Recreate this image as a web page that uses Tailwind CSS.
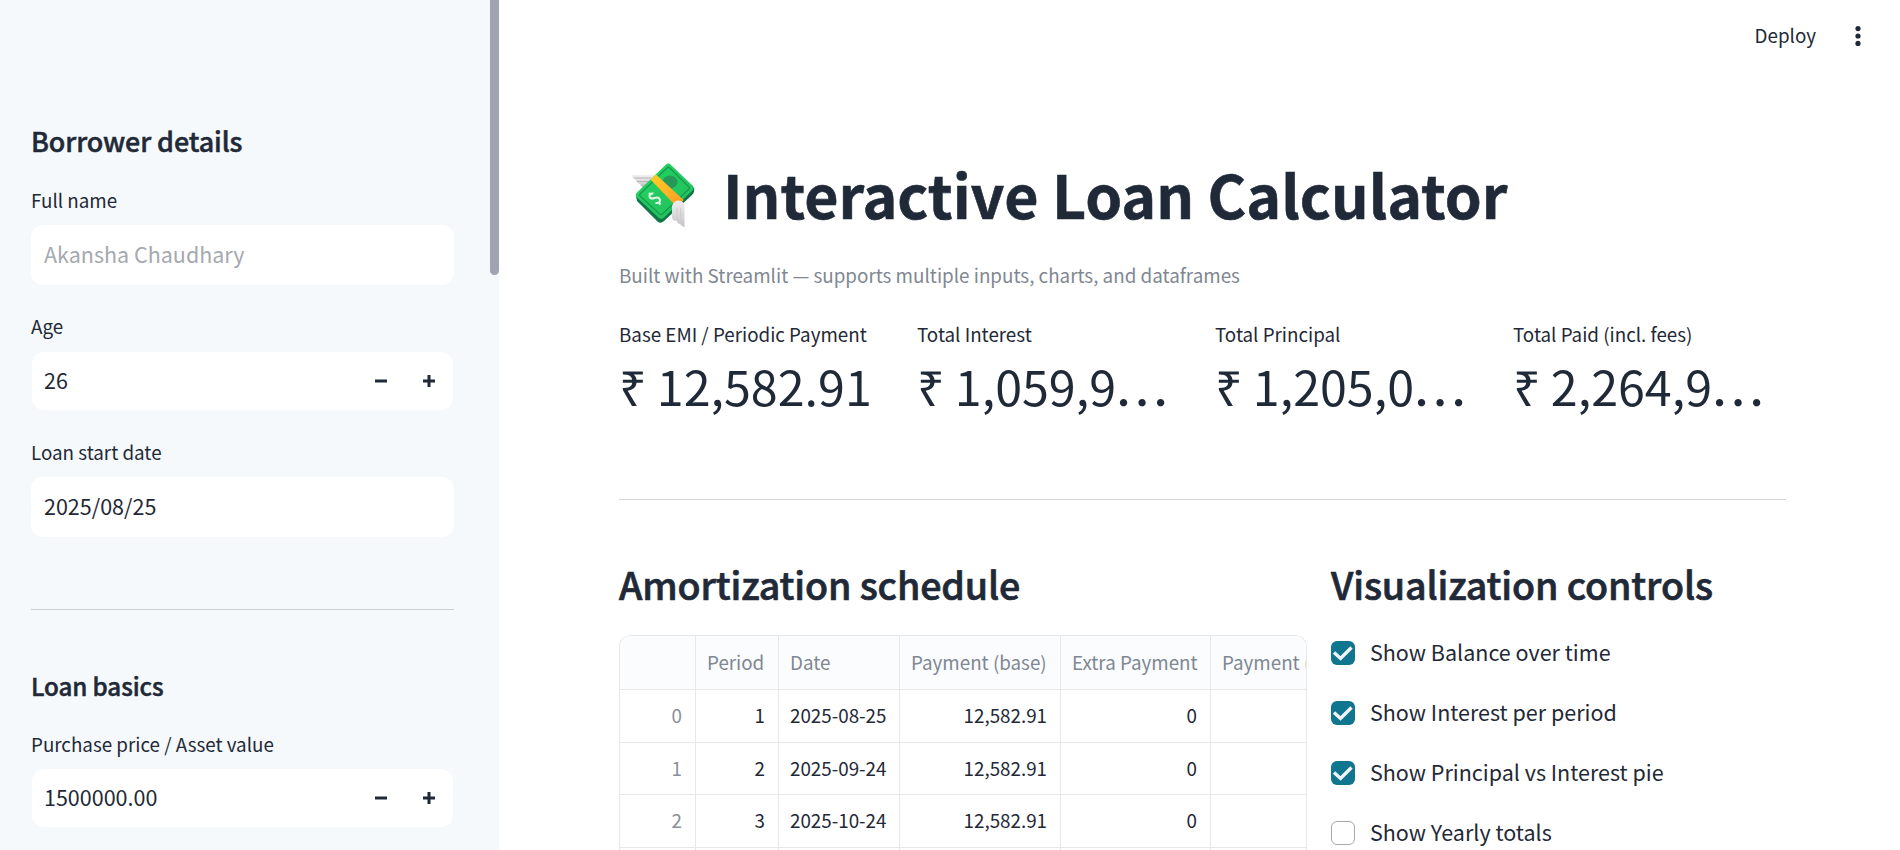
<!DOCTYPE html>
<html lang="en">
<head>
<meta charset="utf-8">
<title>Interactive Loan Calculator</title>
<script src="https://cdn.jsdelivr.net/npm/@tailwindcss/browser@4"></script>
</head>
<body class="h-[850px] w-[1900px] overflow-hidden bg-white font-['Noto_Sans_CJK_KR','Noto_Sans_CJK_SC',sans-serif] text-[#1f2937]">
<div class="flex h-[850px]">
  <aside class="relative flex w-[499px] shrink-0 flex-col overflow-hidden bg-[#f5f9fc] pr-[45px] pl-[31px] pt-[123px]">
    <div class="absolute top-0 right-0 h-[275px] w-[9px] rounded-b-full bg-[#9fa4ae]"></div>
    <h2 class="h-9 shrink-0 whitespace-nowrap text-[26.86px] leading-9 font-medium tracking-[-0.08px] [-webkit-text-stroke:0.5px_#1f2937]"><span>Borrower details</span></h2>
    <label class="mt-[26px] h-[30px] shrink-0 text-[18.8px] leading-[30px]"><span>Full name</span></label>
    <div class="mt-[10px] flex h-[60px] shrink-0 items-center rounded-xl bg-white px-[13px] pb-[3px] text-[21.5px] leading-8 text-[#a5a9b0]"><span>Akansha Chaudhary</span></div>
    <label class="mt-[26px] h-[30px] shrink-0 text-[18.8px] leading-[30px]"><span>Age</span></label>
    <div class="mx-px mt-[11px] flex h-[58px] shrink-0 items-center rounded-xl bg-white pr-[18px] pl-[12px] text-[21.5px] leading-8">
      <span class="grow pb-[3px]">26</span>
      <svg class="mr-9 size-3" viewBox="0 0 12 12"><path d="M0 6H12" stroke="#1f2937" stroke-width="3"/></svg>
      <svg class="size-3" viewBox="0 0 12 12"><path d="M0 6H12M6 0V12" stroke="#1f2937" stroke-width="3"/></svg>
    </div>
    <label class="mt-[27px] h-[30px] shrink-0 text-[18.8px] leading-[30px]"><span>Loan start date</span></label>
    <div class="mt-[10px] flex h-[60px] shrink-0 items-center rounded-xl bg-white px-[13px] pb-[3px] text-[21.5px] leading-8"><span>2025/08/25</span></div>
    <div class="mt-[72px] h-px shrink-0 bg-[#cbcfd3]"></div>
    <h3 class="mt-[58px] h-9 shrink-0 whitespace-nowrap text-[24.2px] leading-9 font-medium tracking-[-0.1px] [-webkit-text-stroke:0.5px_#1f2937]"><span>Loan basics</span></h3>
    <label class="mt-[25px] h-[30px] shrink-0 text-[18.8px] leading-[30px]"><span>Purchase price / Asset value</span></label>
    <div class="mx-px mt-[10px] flex h-[58px] shrink-0 items-center rounded-xl bg-white pr-[18px] pl-[12px] text-[21.5px] leading-8">
      <span class="grow pb-[2px]">1500000.00</span>
      <svg class="mr-9 size-3" viewBox="0 0 12 12"><path d="M0 6H12" stroke="#1f2937" stroke-width="3"/></svg>
      <svg class="size-3" viewBox="0 0 12 12"><path d="M0 6H12M6 0V12" stroke="#1f2937" stroke-width="3"/></svg>
    </div>
  </aside>
  <main class="flex w-[1401px] flex-col">
    <header class="flex h-[72px] shrink-0 items-center justify-end pr-[38px]">
      <span class="pb-[2px] text-[18.8px] leading-[30px]">Deploy</span>
      <svg class="ml-[38px] h-5 w-[8px]" viewBox="0 0 8 20" fill="#1f2937"><circle cx="4" cy="2.6" r="2.6"/><circle cx="4" cy="10" r="2.6"/><circle cx="4" cy="17.4" r="2.6"/></svg>
    </header>
    <div class="flex w-[1287px] flex-col pl-[120px]">
      <h1 class="mt-[81px] flex h-20 items-center whitespace-nowrap text-[59.1px] leading-[80px] font-bold [-webkit-text-stroke:0.6px_#1f2937]">
        <svg class="mt-[3px] mr-6 ml-[10px] h-[68px] w-[70px] shrink-0" viewBox="0 0 70 68" role="img" aria-label="Money with wings">
          <defs>
            <linearGradient id="bill" x1="0" y1="0" x2="1" y2="1"><stop offset="0" stop-color="#1fd660"/><stop offset="1" stop-color="#25bd5c"/></linearGradient>
            <linearGradient id="band" x1="0" y1="0" x2="1" y2="1"><stop offset="0" stop-color="#ffd025"/><stop offset="1" stop-color="#ff9a25"/></linearGradient>
            <linearGradient id="wing" x1="0" y1="0" x2="0" y2="1"><stop offset="0" stop-color="#f1eff1"/><stop offset="1" stop-color="#c7c3c8"/></linearGradient>
          </defs>
          <path d="M3 14H27L18 27Q12 27 11 23Q7 22 7 19Q3 18 3 14Z" fill="url(#wing)"/>
          <path d="M5 17H22M8 20.500H20M12 24H17" stroke="#b9b5ba" stroke-width="1"/>
          <path d="M7 35L8 40L29 61Q32 63 35 60L63 34Q66 31 65 27L61 25Z" fill="#117647"/>
          <path d="M37 3.500Q39.500 1.500 42 4L63.500 24.500Q66 27 63.500 29.500L35 56.500Q32 59 29.500 56.500L8 36.500Q5.500 34 8 31.500Z" fill="url(#bill)"/>
          <path d="M38.500 6.500Q39.500 5.800 40.500 6.800L59.500 25.500Q61 27 59.500 28.500L33.500 53Q32 54 30.500 53L11 35Q10 34 11 33Z" fill="none" stroke="#199a50" stroke-width="1.300"/>
          <ellipse cx="41" cy="21" rx="7.500" ry="6.500" fill="#27975a"/>
          <path d="M21.500 18.500L27 13.500L54.500 39L52 42.500L45 43Z" fill="url(#band)"/>
          <path d="M24.500 32.500Q20 32 20.500 35.500Q21.500 38.500 25.500 37Q30 35.500 31 39Q31 42.500 26.500 42M20 32L22.500 34M29.500 41L31.500 43.500" fill="none" stroke="#e6f7ea" stroke-width="2.100"/>
          <path d="M43 45Q45 39 50 39.500Q54.500 41 55.500 43V66.500L51.500 64V63Q48 63 48 60Q43 60 43 56Z" fill="url(#wing)"/>
          <path d="M48 47V59M51.500 47V63" stroke="#cfcbd0" stroke-width="1"/>
        </svg><span>Interactive Loan Calculator</span>
      </h1>
      <p class="mt-[27px] h-[30px] text-[18.82px] leading-[30px] text-[#808792]"><span>Built with Streamlit — supports multiple inputs, charts, and dataframes</span></p>
      <section class="mt-[29px] grid h-[180px] grid-cols-[298px_298px_298px_272px] whitespace-nowrap">
        <div><div class="text-[18.8px] leading-[30px]"><span>Base EMI / Periodic Payment</span></div><div class="mt-[4px] text-[48.4px] leading-[64px] [word-spacing:-1px]"><span>₹ 12,582.91</span></div></div>
        <div><div class="text-[18.8px] leading-[30px]"><span>Total Interest</span></div><div class="mt-[4px] text-[48.4px] leading-[64px] [word-spacing:-1px]"><span>₹ 1,059,9<span class="inline-block translate-x-[2px] translate-y-[15px] scale-115">…</span></span></div></div>
        <div><div class="text-[18.8px] leading-[30px]"><span>Total Principal</span></div><div class="mt-[4px] text-[48.4px] leading-[64px] [word-spacing:-1px]"><span>₹ 1,205,0<span class="inline-block translate-x-[2px] translate-y-[15px] scale-115">…</span></span></div></div>
        <div><div class="text-[18.8px] leading-[30px]"><span>Total Paid (incl. fees)</span></div><div class="mt-[4px] text-[48.4px] leading-[64px] [word-spacing:-1px]"><span>₹ 2,264,9<span class="inline-block translate-x-[2px] translate-y-[15px] scale-115">…</span></span></div></div>
      </section>
      <div class="h-px bg-[#d3d5d8]"></div>
      <div class="mt-[60px] flex whitespace-nowrap">
        <section class="w-[712px] shrink-0">
          <h2 class="h-12 text-[37.6px] leading-[48px] font-medium tracking-[-0.12px] [-webkit-text-stroke:0.7px_#1f2937]"><span>Amortization schedule</span></h2>
          <div class="mt-[27px] h-[230px] w-[688px] overflow-hidden rounded-t-xl border border-b-0 border-[#e6e8ea] text-[18.8px]">
            <div class="grid h-[54px] grid-cols-[76px_83px_121px_161px_150px_95px] divide-x divide-[#e6e8ea] border-b border-[#e6e8ea] bg-[#fafcfe] leading-[51px] text-[#808792] *:px-[11px]">
              <div></div><div>Period</div><div>Date</div><div>Payment (base)</div><div>Extra Payment</div><div class="overflow-hidden">Payment (total)</div>
            </div>
            <div class="grid h-[52.5px] grid-cols-[76px_83px_121px_161px_150px_95px] divide-x divide-[#e6e8ea] border-b border-[#e6e8ea] text-right leading-[50px] *:pr-[13px]">
              <div class="text-[#8a9099]">0</div><div>1</div><div class="pl-[11px] text-left">2025-08-25</div><div>12,582.91</div><div>0</div><div></div>
            </div>
            <div class="grid h-[52.5px] grid-cols-[76px_83px_121px_161px_150px_95px] divide-x divide-[#e6e8ea] border-b border-[#e6e8ea] text-right leading-[50px] *:pr-[13px]">
              <div class="text-[#8a9099]">1</div><div>2</div><div class="pl-[11px] text-left">2025-09-24</div><div>12,582.91</div><div>0</div><div></div>
            </div>
            <div class="grid h-[52.5px] grid-cols-[76px_83px_121px_161px_150px_95px] divide-x divide-[#e6e8ea] border-b border-[#e6e8ea] text-right leading-[50px] *:pr-[13px]">
              <div class="text-[#8a9099]">2</div><div>3</div><div class="pl-[11px] text-left">2025-10-24</div><div>12,582.91</div><div>0</div><div></div>
            </div>
            <div class="grid h-[52.5px] grid-cols-[76px_83px_121px_161px_150px_95px] divide-x divide-[#e6e8ea]"><div></div><div></div><div></div><div></div><div></div><div></div></div>
          </div>
        </section>
        <section>
          <h2 class="h-12 text-[37.6px] leading-[48px] font-medium tracking-[-0.12px] [-webkit-text-stroke:0.7px_#1f2937]"><span>Visualization controls</span></h2>
          <div class="mt-[33px] flex flex-col gap-9 text-[21.5px] leading-[22px]">
            <label class="flex h-6 gap-[15px]"><span class="size-6 rounded-md bg-[#10758f]"><svg class="size-6" viewBox="0 0 24 24"><path d="M3 11.500L9.500 17.500L20.500 6.500" fill="none" stroke="#f1f5f9" stroke-width="3.400"/></svg></span><span>Show Balance over time</span></label>
            <label class="flex h-6 gap-[15px]"><span class="size-6 rounded-md bg-[#10758f]"><svg class="size-6" viewBox="0 0 24 24"><path d="M3 11.500L9.500 17.500L20.500 6.500" fill="none" stroke="#f1f5f9" stroke-width="3.400"/></svg></span><span>Show Interest per period</span></label>
            <label class="flex h-6 gap-[15px]"><span class="size-6 rounded-md bg-[#10758f]"><svg class="size-6" viewBox="0 0 24 24"><path d="M3 11.500L9.500 17.500L20.500 6.500" fill="none" stroke="#f1f5f9" stroke-width="3.400"/></svg></span><span>Show Principal vs Interest pie</span></label>
            <label class="flex h-6 gap-[15px]"><span class="size-6 rounded-md border border-[#a3a8b1] bg-white"></span><span>Show Yearly totals</span></label>
          </div>
        </section>
      </div>
    </div>
  </main>
</div>
</body>
</html>
